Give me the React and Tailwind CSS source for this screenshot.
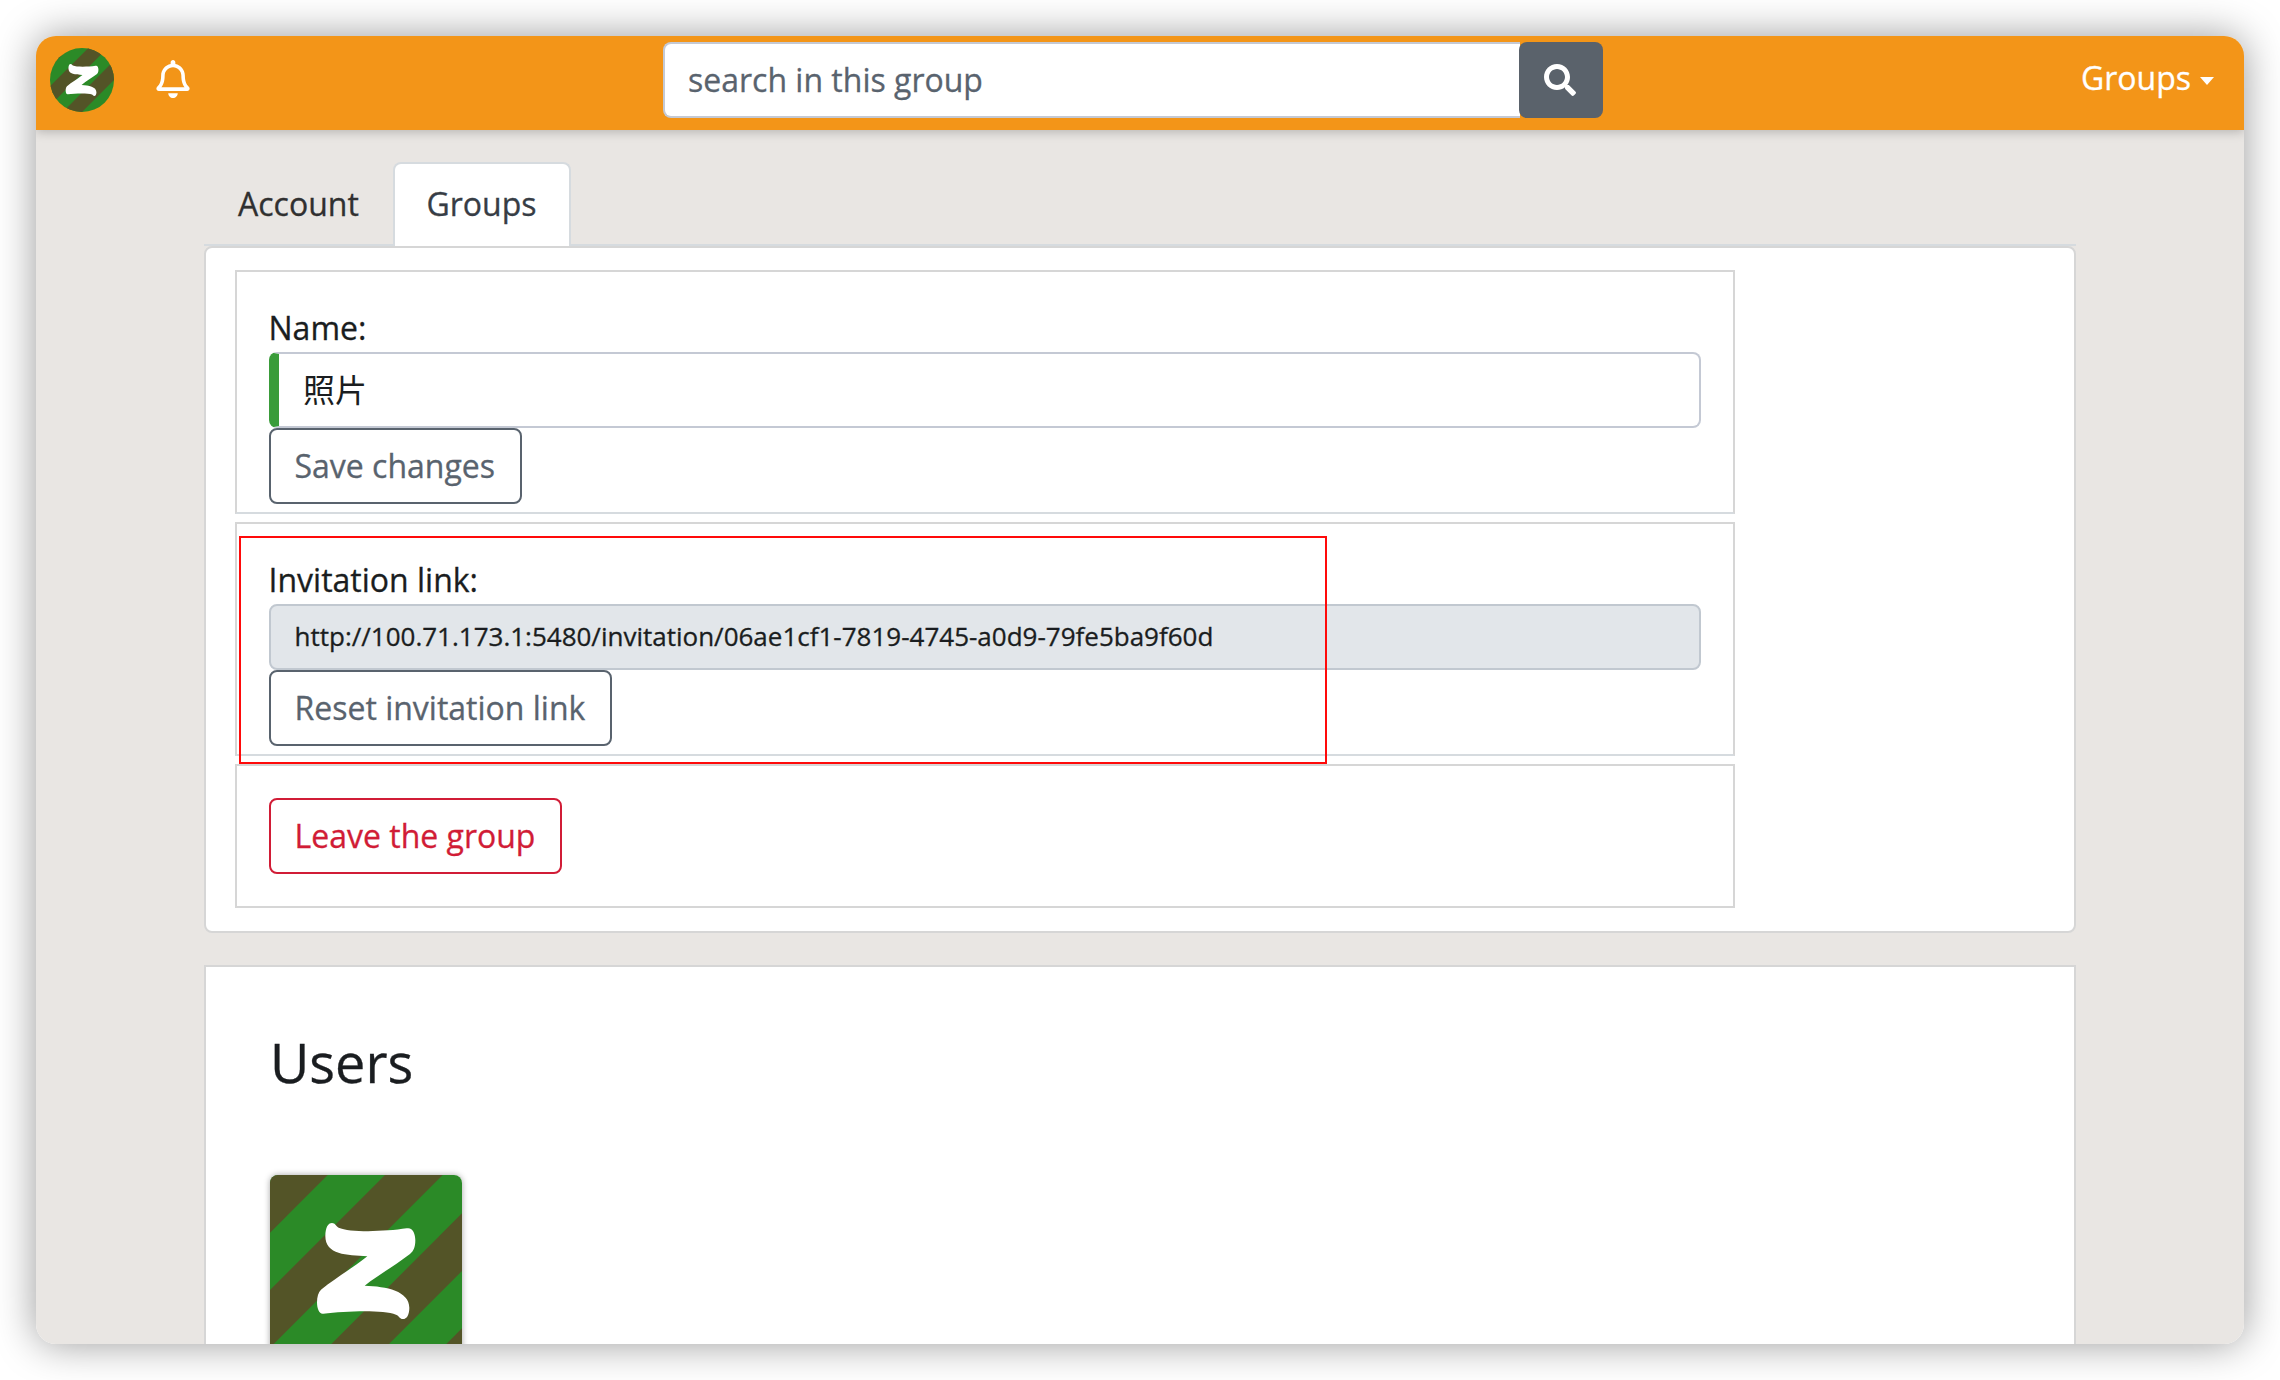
import { FaRegBell, FaSearch } from "react-icons/fa";

// Zusam brand mark on diagonal stripes.
function Mark({ className }) {
  return (
    <svg viewBox="0 0 576 576" className={className}>
      <rect width="576" height="576" fill="#2b8a27" />
      <g fill="#535427">
        <path d="M0 0H173L0 173Z" />
        <path d="M345 0H518L0 518V345Z" />
        <path d="M576 115V288L288 576H115Z" />
        <path d="M576 460V576H460Z" />
      </g>
      <path
        fill="#fff"
        d="M166 183C166 158 174 144 186 144C196 144 197 153 206 158C240 173 345 170 410 160C428 156 436 176 436 196C436 218 430 229 420 237C370 275 330 296 284 332C350 334 418 348 418 398C418 420 410 432 399 432C388 432 389 423 378 419C340 404 230 408 160 416C148 418 141 402 141 382C141 366 145 352 153 344C196 309 244 282 292 244C230 240 166 240 166 183Z"
      />
    </svg>
  );
}

function OutlineButton({ children, className }) {
  return (
    <button className={`block h-[76px] rounded-lg border-2 px-[23.5px] text-left leading-[48px] whitespace-nowrap ${className}`}>
      {children}
    </button>
  );
}

function Header() {
  return (
    <header className="relative z-10 grid h-[94px] grid-cols-[627px_940px_1fr] bg-[#f39518] pt-1.5 shadow-[0_2px_10px_rgba(0,0,0,0.22)]">
      <div className="flex pt-1.5 pl-3.5">
        <Mark className="size-16 rounded-full" />
        <FaRegBell className="mt-3 ml-[42px] h-[38px] w-[34px] text-white" />
      </div>
      <div className="flex h-[76px]">
        <div className="flex h-full w-[857px] items-center rounded-l-lg border-2 border-r-0 border-[#c4c9d4] bg-white pl-[23px] text-[#59636e]">
          search in this group
        </div>
        <div className="-ml-px flex h-full w-[84px] items-center justify-center rounded-lg bg-[#5a626b] pr-0.5 text-white">
          <FaSearch className="size-8" />
        </div>
      </div>
      <div className="flex h-[72px] items-center justify-end pr-[30px] text-white">
        Groups
        <span className="mt-1.5 ml-[9px] border-x-[7px] border-t-8 border-x-transparent border-t-white" />
      </div>
    </header>
  );
}

export default function App() {
  return (
    <div className="h-[1380px] w-[2280px] overflow-hidden bg-white p-9 font-['Open_Sans','Noto_Sans_CJK_SC',sans-serif] text-[32px] leading-[48px] text-[#1a1d20] [-webkit-text-stroke:0.3px]">
      <div className="h-[1308px] rounded-[20px] shadow-[0_0_40px_rgba(0,0,0,0.4)]">
        <div className="h-full overflow-hidden rounded-[20px] bg-[#e9e6e3]">
          <Header />
          <main className="mx-[168px] mt-8">
            <nav className="flex h-[84px] border-b-2 border-[#d6dbdf]">
              <div className="w-[189px] pt-[18px] pl-[34px] text-[#303030]">Account</div>
              <div className="h-[84px] w-[178px] rounded-t-lg border-2 border-b-0 border-[#d6dbdf] bg-white pt-4 pl-[31.5px] text-[#373d45]">
                Groups
              </div>
            </nav>
            <section className="h-[687px] rounded-lg border-2 border-[#d6d6d6] bg-white pt-[22px] pl-[29px]">
              <div className="flex w-[1500px] flex-col gap-2">
                <div className="h-[244px] border-2 border-[#d6d6d6] border-b-[#d6dbdf] px-8 pt-8">
                  <div className="-ml-[0.5px]">Name:</div>
                  <div className="h-[76px] overflow-hidden rounded-lg border-2 border-l-[10px] border-[#c4c9d4] border-l-[#3a9c3a] pt-3 pl-6 [-webkit-text-stroke:0px]">
                    照片
                  </div>
                  <OutlineButton className="w-[253px] border-[#59636e] text-[#59636e]">Save changes</OutlineButton>
                </div>
                <div className="relative h-[234px] border-2 border-[#d6d6d6] border-b-[#d6dbdf] px-8 pt-8">
                  <div className="-ml-[0.5px]">Invitation link:</div>
                  <div className="h-[66px] rounded-lg border-2 border-[#c1c8d0] bg-[#e2e6ea] pt-[9px] pl-[23.5px] text-[26px] leading-[42px]">
                    http://100.71.173.1:5480/invitation/06ae1cf1-7819-4745-a0d9-79fe5ba9f60d
                  </div>
                  <OutlineButton className="w-[343px] border-[#59636e] text-[#59636e]">Reset invitation link</OutlineButton>
                  <div className="absolute top-[12px] left-[2px] h-[228px] w-[1088px] border-2 border-[#ff0a0a]" />
                </div>
                <div className="h-[144px] border-2 border-[#d6d6d6] px-8 pt-8">
                  <OutlineButton className="w-[293px] border-[#d11c36] text-[#d11c36]">Leave the group</OutlineButton>
                </div>
              </div>
            </section>
            <section className="mt-8 h-[420px] border-2 border-[#d6d6d6] bg-white pt-[62px] pl-16">
              <h2 className="text-[54px] leading-[67px]">Users</h2>
              <Mark className="mt-[79px] size-48 rounded-lg shadow-[0_0_6px_rgba(0,0,0,0.35)]" />
            </section>
          </main>
        </div>
      </div>
    </div>
  );
}
